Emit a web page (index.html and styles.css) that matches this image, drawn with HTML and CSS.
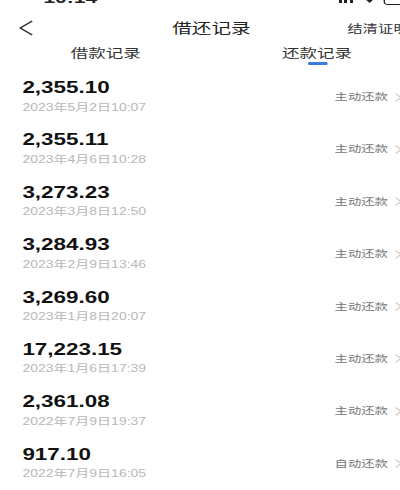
FILE: index.html
```html
<!DOCTYPE html>
<html lang="zh-CN">
<head>
    <meta charset="UTF-8">
    <meta name="viewport" content="width=device-width, initial-scale=1.0">
    <title>借还记录</title>
    <link rel="stylesheet" href="styles.css">
</head>
<body>

    <div class="screen">

        <div class="status">
            <span class="time">10:14</span>
            <div class="status-icons">
                <span class="dots"></span>
                <svg class="wifi" width="8" height="6" viewBox="0 0 8 6"><path d="M0 0 L8 0 L4 5 Z" fill="#222"/></svg>
                <span class="battery"></span>
            </div>
        </div>

        <div class="nav">
            <svg class="back" width="11" height="16" viewBox="0 0 11 16"><polyline points="10,1 1.5,8 10,15" fill="none" stroke="#333" stroke-width="1.3"/></svg>
            <h1 class="title">借还记录</h1>
            <span class="nav-link">结清证明</span>
        </div>

        <div class="tabs">
            <div class="tab">借款记录</div>
            <div class="tab active">还款记录<span class="bar"></span></div>
        </div>

        <ul class="records">
            <li class="record">
                <div class="info"><div class="amount">2,355.10</div><div class="date">2023年5月2日10:07</div></div>
                <div class="kind">主动还款<svg class="more" width="5" height="9" viewBox="0 0 5 9"><polyline points="0.5,0.5 4.5,4.5 0.5,8.5" fill="none" stroke="#c8c8c8" stroke-width="1"/></svg></div>
            </li>
            <li class="record">
                <div class="info"><div class="amount">2,355.11</div><div class="date">2023年4月6日10:28</div></div>
                <div class="kind">主动还款<svg class="more" width="5" height="9" viewBox="0 0 5 9"><polyline points="0.5,0.5 4.5,4.5 0.5,8.5" fill="none" stroke="#c8c8c8" stroke-width="1"/></svg></div>
            </li>
            <li class="record">
                <div class="info"><div class="amount">3,273.23</div><div class="date">2023年3月8日12:50</div></div>
                <div class="kind">主动还款<svg class="more" width="5" height="9" viewBox="0 0 5 9"><polyline points="0.5,0.5 4.5,4.5 0.5,8.5" fill="none" stroke="#c8c8c8" stroke-width="1"/></svg></div>
            </li>
            <li class="record">
                <div class="info"><div class="amount">3,284.93</div><div class="date">2023年2月9日13:46</div></div>
                <div class="kind">主动还款<svg class="more" width="5" height="9" viewBox="0 0 5 9"><polyline points="0.5,0.5 4.5,4.5 0.5,8.5" fill="none" stroke="#c8c8c8" stroke-width="1"/></svg></div>
            </li>
            <li class="record">
                <div class="info"><div class="amount">3,269.60</div><div class="date">2023年1月8日20:07</div></div>
                <div class="kind">主动还款<svg class="more" width="5" height="9" viewBox="0 0 5 9"><polyline points="0.5,0.5 4.5,4.5 0.5,8.5" fill="none" stroke="#c8c8c8" stroke-width="1"/></svg></div>
            </li>
            <li class="record">
                <div class="info"><div class="amount">17,223.15</div><div class="date">2023年1月6日17:39</div></div>
                <div class="kind">主动还款<svg class="more" width="5" height="9" viewBox="0 0 5 9"><polyline points="0.5,0.5 4.5,4.5 0.5,8.5" fill="none" stroke="#c8c8c8" stroke-width="1"/></svg></div>
            </li>
            <li class="record">
                <div class="info"><div class="amount">2,361.08</div><div class="date">2022年7月9日19:37</div></div>
                <div class="kind">主动还款<svg class="more" width="5" height="9" viewBox="0 0 5 9"><polyline points="0.5,0.5 4.5,4.5 0.5,8.5" fill="none" stroke="#c8c8c8" stroke-width="1"/></svg></div>
            </li>
            <li class="record">
                <div class="info"><div class="amount">917.10</div><div class="date">2022年7月9日16:05</div></div>
                <div class="kind">自动还款<svg class="more" width="5" height="9" viewBox="0 0 5 9"><polyline points="0.5,0.5 4.5,4.5 0.5,8.5" fill="none" stroke="#c8c8c8" stroke-width="1"/></svg></div>
            </li>
        </ul>

    </div>

</body>
</html>
```

FILE: styles.css
```css
:root{
    --font-primary: "Liberation Sans", "Noto Sans CJK SC", sans-serif;
    --accent: #3b7ddd;
}

html, body{
    margin: 0;
    overflow: hidden;
    background: #fff;
}

body{
    font-family: var(--font-primary);
    color: #222;
    width: 400px;
    height: 490px;
}

/* the capture is stretched sideways, so the screen is drawn narrow and widened */
.screen{
    width: 302px;
    transform: scaleX(1.4);
    transform-origin: left top;
}

.status{
    height: 5px;
    overflow: hidden;
    display: flex;
    align-items: flex-end;
    justify-content: space-between;
    padding: 0 12px 0 31px;
}

.time{
    font-size: 15px;
    font-weight: bold;
    line-height: 15px;
}

.status-icons{
    display: flex;
    align-items: flex-end;
    gap: 6px;
}

.dots{
    width: 12px;
    height: 3px;
    margin-bottom: 2px;
    background: repeating-linear-gradient(90deg, #222 0 2px, transparent 2px 4px);
}

.wifi{
    margin-bottom: 1px;
}

.battery{
    width: 16px;
    height: 10px;
    border: 1.5px solid #222;
    border-radius: 3px;
    box-sizing: border-box;
}

.nav{
    height: 36px;
    margin-top: 5px;
    display: grid;
    grid-template-columns: 1fr auto 1fr;
    align-items: center;
}

.back{
    margin-left: 13px;
}

.title{
    margin: 0;
    font-size: 14px;
    font-weight: normal;
    line-height: 18px;
    color: #222;
}

.nav-link{
    justify-self: end;
    font-size: 11px;
    color: #333;
    padding-right: 10px;
    white-space: nowrap;
}

.tabs{
    height: 23px;
    display: grid;
    grid-template-columns: 1fr 1fr;
}

.tab{
    display: flex;
    flex-direction: column;
    align-items: center;
    padding-top: 1px;
    font-size: 12.5px;
    line-height: 14px;
    color: #333;
}

.tab .bar{
    width: 14px;
    height: 2.5px;
    margin-top: 1px;
    border-radius: 1px;
    background: var(--accent);
}

.records{
    list-style: none;
    margin: 0;
    padding: 0;
}

.record{
    height: 52.4px;
    box-sizing: border-box;
    padding: 9px 15px 0 16px;
    display: flex;
    justify-content: space-between;
    align-items: flex-start;
}

.amount{
    font-size: 16px;
    font-weight: bold;
    line-height: 20px;
    color: #111;
}

.date{
    margin-top: 2.5px;
    font-size: 10px;
    line-height: 14px;
    color: #b8b8b8;
    white-space: nowrap;
}

.kind{
    display: flex;
    align-items: center;
    gap: 5px;
    margin-top: 12px;
    font-size: 9.5px;
    line-height: 14px;
    color: #777;
}
```
